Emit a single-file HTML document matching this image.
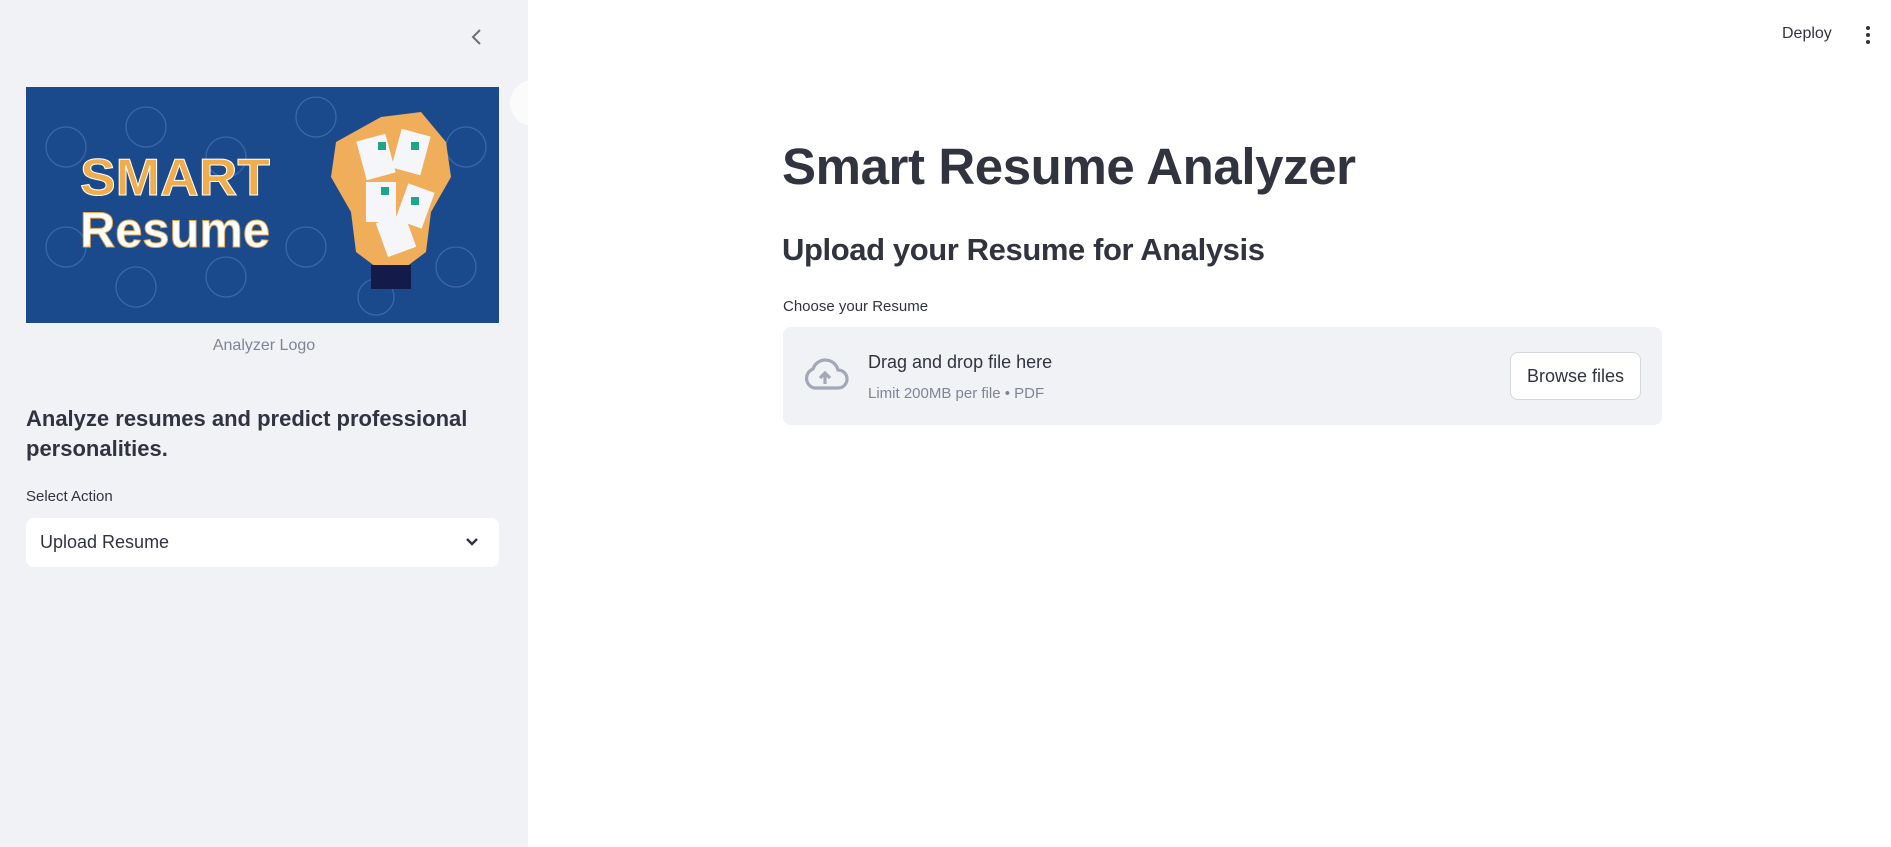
<!DOCTYPE html>
<html><head><meta charset="utf-8"><style>
*{margin:0;padding:0;box-sizing:border-box}
body{width:1891px;height:847px;overflow:hidden;background:#fff;font-family:"Liberation Sans",sans-serif;color:#31333f;position:relative}
.side{position:absolute;left:0;top:0;width:528px;height:847px;background:#f0f2f6;overflow:hidden}
.abs{position:absolute;white-space:nowrap}
</style></head><body>
<div class="side">
  <svg class="abs" style="left:468px;top:27px" width="18" height="20" viewBox="0 0 18 20"><path d="M12 3 L5 10 L12 17" fill="none" stroke="#6b6f7b" stroke-width="2"/></svg>
  <svg class="abs" style="left:26px;top:87px" width="473" height="236" viewBox="0 0 473 236">
    <rect width="473" height="236" fill="#1a4a8c"/>
    <g fill="none" stroke="#3d66a5" stroke-width="1.3">
      <circle cx="40" cy="60" r="20"/><circle cx="120" cy="40" r="20"/><circle cx="200" cy="70" r="20"/><circle cx="290" cy="30" r="20"/><circle cx="440" cy="60" r="20"/>
      <circle cx="40" cy="160" r="20"/><circle cx="110" cy="200" r="20"/><circle cx="200" cy="190" r="20"/><circle cx="280" cy="160" r="20"/><circle cx="430" cy="180" r="20"/><circle cx="350" cy="210" r="18"/>
    </g>
    <text x="54" y="108" font-family="Liberation Sans" font-weight="bold" font-size="52" fill="#f0ad4e" stroke="#fff" stroke-width="1" textLength="190" lengthAdjust="spacingAndGlyphs">SMART</text>
    <text x="54" y="160" font-family="Liberation Sans" font-weight="bold" font-size="50" fill="#fff" stroke="#e8a64a" stroke-width="1" textLength="190" lengthAdjust="spacingAndGlyphs">Resume</text>
    <path d="M355 30 L395 25 L420 55 L425 90 L405 125 L400 165 L380 180 L350 180 L330 165 L325 125 L305 90 L310 55 Z" fill="#f0ad5a"/>
    <rect x="345" y="178" width="40" height="24" fill="#141a4a"/>
    <g fill="#f4f6fa"><rect x="335" y="50" width="30" height="40" transform="rotate(-15 350 70)"/><rect x="370" y="45" width="30" height="40" transform="rotate(15 385 65)"/><rect x="340" y="95" width="30" height="40"/><rect x="375" y="100" width="28" height="38" transform="rotate(20 389 119)"/><rect x="355" y="130" width="30" height="36" transform="rotate(-20 370 148)"/></g>
    <g fill="#1fa58a"><rect x="352" y="55" width="8" height="8"/><rect x="385" y="55" width="8" height="8"/><rect x="355" y="100" width="8" height="8"/><rect x="385" y="110" width="8" height="8"/></g>
  </svg>
  <div class="abs" style="left:0;width:528px;text-align:center;top:337px;font-size:16px;color:#808495">Analyzer Logo</div>
  <div class="abs" style="left:26px;top:404px;font-size:22px;font-weight:bold;line-height:30px;white-space:normal;width:470px">Analyze resumes and predict professional personalities.</div>
  <div class="abs" style="left:26px;top:488px;font-size:15px">Select Action</div>
  <div class="abs" style="left:26px;top:518px;width:473px;height:49px;background:#fff;border-radius:8px"></div>
  <div class="abs" style="left:40px;top:532px;font-size:18px">Upload Resume</div>
  <svg class="abs" style="left:464px;top:535px" width="16" height="14" viewBox="0 0 16 14"><path d="M3 4 L8 9 L13 4" fill="none" stroke="#31333f" stroke-width="2.4"/></svg>
  <div class="abs" style="left:510px;top:80px;width:46px;height:46px;border-radius:50%;background:#fbfbfc"></div>
</div>
<div class="abs" style="left:1782px;top:25px;font-size:16px">Deploy</div>
<svg class="abs" style="left:1864px;top:25px" width="8" height="20"><circle cx="4" cy="3" r="2" fill="#31333f"/><circle cx="4" cy="10" r="2" fill="#31333f"/><circle cx="4" cy="17" r="2" fill="#31333f"/></svg>
<div class="abs" style="left:782px;top:137px;font-size:51px;font-weight:bold;letter-spacing:-0.4px">Smart Resume Analyzer</div>
<div class="abs" style="left:782px;top:232px;font-size:31px;font-weight:bold;letter-spacing:-0.4px">Upload your Resume for Analysis</div>
<div class="abs" style="left:783px;top:298px;font-size:15px">Choose your Resume</div>
<div class="abs" style="left:783px;top:327px;width:879px;height:98px;background:#f0f2f6;border-radius:8px"></div>
<svg class="abs" style="left:801px;top:357px" width="48" height="36" viewBox="0 0 48 36"><path d="M13 31 H37 A9 9 0 0 0 37 13 A13 13 0 0 0 12 12 A10 10 0 0 0 13 31 Z" fill="none" stroke="#a3a8b8" stroke-width="3.2"/><path d="M24 27 V17 M19 21 L24 16 L29 21" fill="none" stroke="#a3a8b8" stroke-width="3.2"/></svg>
<div class="abs" style="left:868px;top:352px;font-size:18px">Drag and drop file here</div>
<div class="abs" style="left:868px;top:385px;font-size:15px;color:#808495">Limit 200MB per file • PDF</div>
<div class="abs" style="left:1510px;top:352px;width:131px;height:48px;background:#fff;border:1px solid #d6d8de;border-radius:8px;font-size:18px;text-align:center;line-height:46px">Browse files</div>
</body></html>
